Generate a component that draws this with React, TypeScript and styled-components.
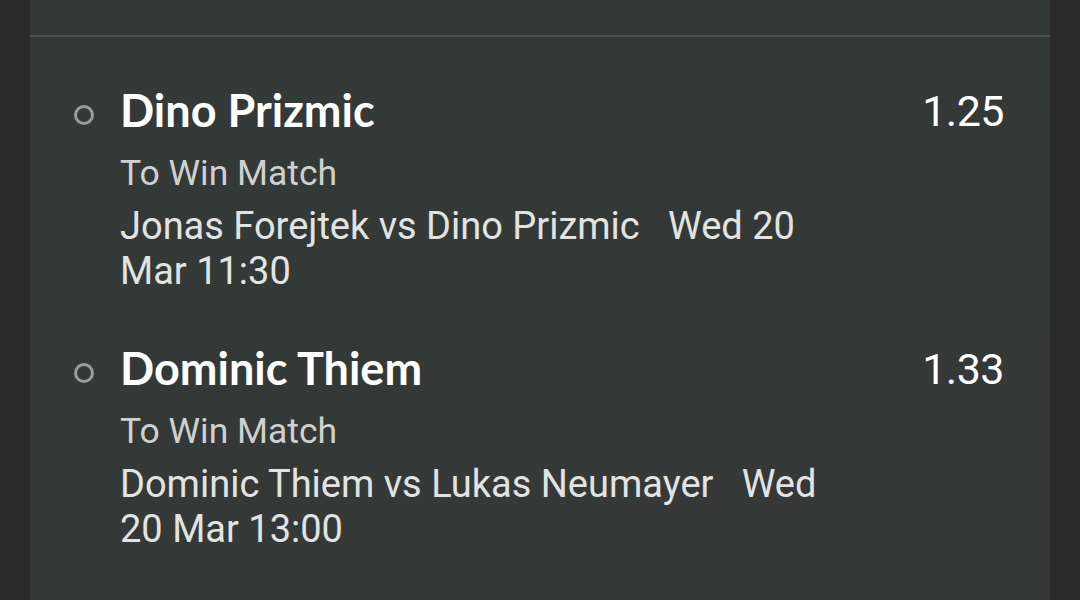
import React from "react";
import styled, { createGlobalStyle } from "styled-components";

const Global = createGlobalStyle`
  html, body { margin: 0; padding: 0; background: #2a2a2a; }
  body { width: 1080px; height: 600px; overflow: hidden; }
`;

const Page = styled.div`
  width: 1080px;
  height: 600px;
  display: flex;
  justify-content: center;
  background: #2a2a2a;
`;

const Panel = styled.div`
  width: 1020px;
  height: 600px;
  background: linear-gradient(160deg, #323a37 0%, #343937 50%, #363837 100%);
  display: flex;
  flex-direction: column;
`;

const TopArea = styled.div`
  height: 35px;
  border-bottom: 2px solid #4a524f;
  flex-shrink: 0;
`;

const List = styled.div`
  display: flex;
  flex-direction: column;
  padding: 47px 46px 0 44px;
  gap: 48px;
`;

const Item = styled.div`
  display: grid;
  grid-template-columns: 46px 1fr auto;
  align-items: start;
`;

const Bullet = styled.span`
  width: 14px;
  height: 14px;
  border: 3px solid #9b9d9c;
  border-radius: 50%;
  margin-top: 21px;
`;

const Body = styled.div`
  display: flex;
  flex-direction: column;
`;

const Name = styled.div`
  font-family: Lato, "Noto Sans", sans-serif;
  font-weight: 700;
  font-size: 45px;
  line-height: 52px;
  color: #ffffff;
`;

const Market = styled.div`
  font-family: Roboto, "Noto Sans", sans-serif;
  font-size: 35.5px;
  line-height: 42px;
  color: #cfd1d0;
  margin-top: 16px;
`;

const Event = styled.div`
  font-family: Roboto, "Noto Sans", sans-serif;
  font-size: 38px;
  line-height: 45px;
  color: #e2e4e3;
  margin-top: 10px;
  max-width: 720px;
`;

const Odds = styled.div`
  font-family: Roboto, "Noto Sans", sans-serif;
  font-weight: 400;
  font-size: 43px;
  line-height: 52px;
  letter-spacing: -0.5px;
  color: #ffffff;
  margin-top: 1px;
`;

const items = [
  {
    name: "Dino Prizmic",
    market: "To Win Match",
    event: "Jonas Forejtek vs Dino Prizmic",
    date: "Wed 20 Mar 11:30",
    odds: "1.25",
  },
  {
    name: "Dominic Thiem",
    market: "To Win Match",
    event: "Dominic Thiem vs Lukas Neumayer",
    date: "Wed 20 Mar 13:00",
    odds: "1.33",
  },
];

export default function App() {
  return (
    <Page>
      <Global />
      <Panel>
        <TopArea />
        <List>
          {items.map((it) => (
            <Item key={it.name}>
              <Bullet />
              <Body>
                <Name>{it.name}</Name>
                <Market>{it.market}</Market>
                <Event>{`${it.event}\u00a0\u00a0 ${it.date}`}</Event>
              </Body>
              <Odds>{it.odds}</Odds>
            </Item>
          ))}
        </List>
      </Panel>
    </Page>
  );
}
